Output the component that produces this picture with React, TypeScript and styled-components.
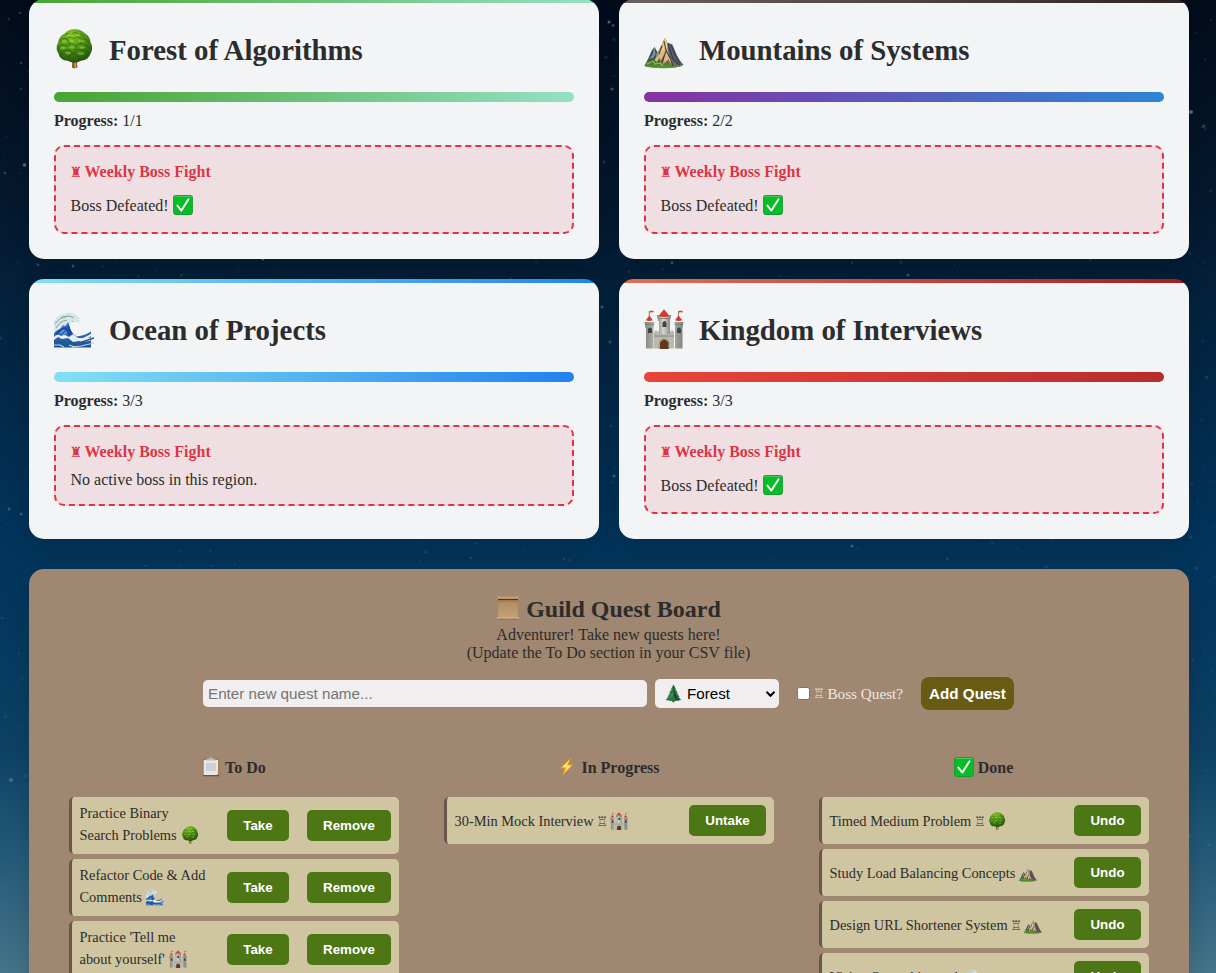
import React from 'react';
import styled, { createGlobalStyle } from 'styled-components';

const Global = createGlobalStyle`
  * { box-sizing: border-box; }
  html, body { margin: 0; padding: 0; }
  body {
    height: 973px;
    overflow: hidden;
    font-family: "Liberation Serif", "Times New Roman", serif;
    font-size: 16px;
    color: #2c2c2c;
    background: #04172c;
  }
  h2, h3, h4, p { margin: 0; }
`;

const Page = styled.div`
  position: relative;
  height: 973px;
  overflow: hidden;
  background: linear-gradient(180deg, #030c1b 0%, #04182d 20%, #04223d 32%, #02335a 54%, #05395f 66%, #0d4266 77%, #245a78 88%, #457488 100%);
`;

const Sky = styled.svg`
  position: absolute;
  inset: 0;
  width: 100%;
  height: 100%;
`;

const Content = styled.main`
  position: relative;
  width: 1160px;
  margin: -1px 0 0 29px;
`;

const Regions = styled.section`
  display: grid;
  grid-template-columns: 1fr 1fr;
  gap: 20px;
`;

const Card = styled.article<{ $bar: string }>`
  height: 260px;
  padding: 25px;
  border-radius: 15px;
  background: linear-gradient(90deg, ${(p) => p.$bar}) top / 100% 4px no-repeat, #f2f4f6;
  box-shadow: 0 8px 25px rgba(0, 0, 0, 0.15);
`;

const CardHead = styled.header`
  display: flex;
  align-items: center;
  gap: 15px;
  height: 51px;
  margin-bottom: 17px;
  svg { margin-top: -1px; }
`;

const CardTitle = styled.h2`
  font-size: 28.8px;
  line-height: 34px;
  font-weight: bold;
`;

const Meter = styled.div<{ $fill: string }>`
  height: 10px;
  border-radius: 5px;
  background: linear-gradient(90deg, ${(p) => p.$fill});
`;

const Progress = styled.p`
  margin-top: 10px;
  line-height: 18px;
`;

const Boss = styled.div`
  margin-top: 15px;
  padding: 15px 14.5px;
  border: 2px dashed #dc3545;
  border-radius: 10px;
  background: #efdfe2;
`;

const BossTitle = styled.h4`
  display: flex;
  height: 20px;
  margin-bottom: 9px;
  padding-top: 1px;
  line-height: 18px;
  color: #dc3545;
`;

const BossText = styled.p<{ $tall?: boolean }>`
  display: flex;
  align-items: center;
  height: ${(p) => (p.$tall ? 26 : 18)}px;
  padding-top: ${(p) => (p.$tall ? 3 : 0)}px;
  line-height: 18px;
  svg { margin: -2px 0 0 4.5px; }
`;

const Rook = styled.span<{ $w: number; $size: number }>`
  display: inline-block;
  width: ${(p) => p.$w}px;
  font-family: "DejaVu Sans", sans-serif;
  font-size: ${(p) => p.$size}px;
  font-weight: normal;
  line-height: 18px;
  text-indent: -1px;
`;

const Board = styled.section`
  height: 460px;
  margin-top: 30px;
  padding: 25px 40px 0;
  border-radius: 15px;
  background: #a08771;
  box-shadow: 0 8px 25px rgba(0, 0, 0, 0.15);
`;

const BoardTitle = styled.h2`
  display: flex;
  align-items: center;
  justify-content: center;
  gap: 6px;
  height: 32px;
  padding: 0 1px 2px 0;
  font-size: 24px;
  line-height: 28px;
  svg { margin-top: -3px; }
`;

const BoardNote = styled.p`
  padding-right: 1px;
  line-height: 18px;
  text-align: center;
`;

const QuestForm = styled.div`
  display: flex;
  align-items: center;
  height: 33px;
  margin: 15px 0 0 134px;
  font-family: "Liberation Sans", Arial, sans-serif;
  font-size: 15.2px;
`;

const QuestInput = styled.input`
  width: 444px;
  height: 27px;
  padding: 0 5px;
  border: 0;
  border-radius: 5px;
  background: #f0eeef;
  font: 15.2px "Liberation Sans", Arial, sans-serif;
  &::placeholder { color: #757575; opacity: 1; }
`;

const RegionSelect = styled.div`
  display: flex;
  align-items: center;
  width: 124px;
  height: 29px;
  margin-left: 8px;
  padding: 0 3px 0 9px;
  border-radius: 5px;
  background: #f0eeef;
  color: #000;
  span { flex: 1; margin-left: 4px; }
`;

const Check = styled.span`
  width: 13px;
  height: 13px;
  margin-left: 18px;
  border: 1px solid #767676;
  border-radius: 2.5px;
  background: #fff;
`;

const CheckLabel = styled.span`
  display: flex;
  width: 89px;
  margin-left: 4px;
  color: #f0e9e2;
  font: 15.2px/18px "Liberation Serif", serif;
  white-space: nowrap;
`;

const AddButton = styled.button`
  width: 93px;
  height: 33px;
  margin-left: 18px;
  padding: 0;
  border: 0;
  border-radius: 8px;
  background: #685c14;
  color: #fff;
  font: bold 15.2px "Liberation Sans", Arial, sans-serif;
`;

const Columns = styled.div`
  display: grid;
  grid-template-columns: repeat(3, 330px);
  column-gap: 45px;
  margin-top: 44px;
`;

const ColumnTitle = styled.h3`
  display: flex;
  align-items: center;
  justify-content: center;
  gap: 4px;
  height: 28px;
  margin-bottom: 15px;
  padding-right: 1px;
  font-size: 16px;
  svg { margin-top: -2px; }
`;

const Quest = styled.div<{ $tall?: boolean }>`
  display: flex;
  align-items: center;
  gap: 18px;
  height: ${(p) => (p.$tall ? 57 : 47)}px;
  margin-bottom: 5px;
  padding: 0 8px 0 7.5px;
  border-left: 3px solid #6a574b;
  border-radius: 5px;
  background: #cfc5a0;
`;

const QuestName = styled.div<{ $tall?: boolean }>`
  flex: 1;
  margin-top: ${(p) => (p.$tall ? -3 : 1)}px;
  font-size: 14.4px;
  white-space: nowrap;
  div { height: 22px; line-height: 22px; }
  svg { margin-left: 0.5px; vertical-align: -4px; }
`;

const QuestButton = styled.button<{ $w: number }>`
  width: ${(p) => p.$w}px;
  height: 31px;
  padding: 0;
  border: 0;
  border-radius: 5px;
  background: #4d7615;
  color: #fff;
  font: bold 13.33px "Liberation Sans", Arial, sans-serif;
`;

type IconProps = { size: number };

const Tree = ({ size }: IconProps) => (
  <svg width={size} height={size} viewBox="0 0 40 40">
    <defs>
      <radialGradient id="leaf" cx=".42" cy=".18" r=".85">
        <stop offset="0" stopColor="#86c62a" />
        <stop offset=".5" stopColor="#4c9016" />
        <stop offset="1" stopColor="#224d0b" />
      </radialGradient>
    </defs>
    <path d="M18.400 30h4.400l.6 8.600q-2.800 1.600-5.400 0z" fill="#7c5426" />
    <path d="M20 31h2l.4 7.800h-2z" fill="#c8964e" />
    <path d="M20.500 .3C25 .2 29 2 31.500 4.800 35 7 36.500 10.500 36.600 13.500 38.800 17 38.500 21.500 36.500 24.500 35 29.500 30.500 31.600 27 31.700 23 34.300 17 34.200 14 31.800 9 32 5 28.500 4.600 24.800 2 21 2.200 16.500 4.300 13.500 4.500 9.500 7.500 6 10.500 4.800 13 1.500 17 .2 20.500 .3z" fill="url(#leaf)" />
    <g fill="none" stroke="#234f08" strokeOpacity=".55" strokeWidth="1">
      <path d="M11 6q3-3 6 0 4-4 7-1 4-1 6 3M6 13q2-5 7-3 3-4 7 0 4-4 8 0 5-1 7 4M4 20q3-6 9-3 4-5 9 0 4-5 9-1 4 0 5 4M7 28q0-7 7-7 3 0 5 4 3-6 9-4 6 0 6 5M14 31q0-6 5-6 5 0 8 6M13 10l3 5M22 17l-2 4M28 10l-2 6" />
    </g>
    <g fill="#a8da44" fillOpacity=".5">
      <ellipse cx="16" cy="6" rx="3" ry="1.500" /><ellipse cx="24" cy="6" rx="2.500" ry="1.300" /><ellipse cx="10" cy="12.500" rx="2.600" ry="1.400" /><ellipse cx="18" cy="12" rx="2.500" ry="1.500" /><ellipse cx="27" cy="12" rx="3" ry="1.400" /><ellipse cx="9" cy="19" rx="3" ry="1.400" /><ellipse cx="18" cy="18.500" rx="3" ry="1.200" /><ellipse cx="28" cy="18.500" rx="3" ry="1.200" /><ellipse cx="14" cy="24" rx="3" ry="1.200" /><ellipse cx="27" cy="24.500" rx="3.200" ry="1.200" />
    </g>
  </svg>
);

const Mountain = ({ size }: IconProps) => (
  <svg width={size} height={size} viewBox="0 0 40 40">
    <defs>
      <linearGradient id="grass" x1="0" y1="0" x2="0" y2="1">
        <stop offset="0" stopColor="#37522c" />
        <stop offset="1" stopColor="#5d9a2c" />
      </linearGradient>
    </defs>
    <path d="M.5 37l4-8 3-7 3-4 3 5 3 8v7q-9 1-16-1z" fill="#3b5155" />
    <path d="M20.800 9l2.700 4.800 4.700 1.700 4.500 10.500 3.300 6L39.500 36q-6 3-18 2.500L9 37l4-12 4-8z" fill="#746858" />
    <path d="M20.800 9L17 17l-3.500 8.500L8 36l5-3 3-5-1 6 6-9-2 10 6-5-1-7 2-5-2-4z" fill="#dbb877" />
    <path d="M20.800 9l-1 7-4 9 6-7-2 10 4-6 1 9 3 5-1-12-2-6-3-5z" fill="#f1d59c" />
    <path d="M23.500 13.800l4.700 1.700 4.500 10.500 3.300 6 3.500 4-8 0-6-8-2-8z" fill="#57607a" />
    <path d="M24 15l5 15 7 6M27 16l4 10 5 8M20 12l2 9 4 8 3 8M18 17l-3 8M22 22l-4 11" stroke="#423a35" strokeWidth="1.100" fill="none" />
    <path d="M10.500 18l-2 8-5 6 4 0 4-7zM13 22l-1 7 3-3z" fill="#8098a0" />
    <path d="M.5 37l4-7 4-1 4 4 3-3 3 6 5-2 5 3 5-1 5 1q-9 2.600-20 2.200Q7 39.200.5 37z" fill="url(#grass)" />
    <path d="M3 35l6-3 2 3 5-1 3 3" stroke="#97b94d" strokeWidth="1.200" fill="none" />
  </svg>
);

const Wave = ({ size }: IconProps) => (
  <svg width={size} height={size} viewBox="0 0 40 40">
    <defs>
      <linearGradient id="sea" x1="0" y1="0" x2="0" y2="1">
        <stop offset="0" stopColor="#a9c6cc" />
        <stop offset=".45" stopColor="#3a72bb" />
        <stop offset="1" stopColor="#1d5290" />
      </linearGradient>
    </defs>
    <path d="M0 14Q3 7 9 5.500q7-2.500 12 0l5 4.500-2 0 1 3.500-3-2.500-3 2-2-.5q-3 2-1.500 6 1.500 6 7.500 9 8-1 14-5v16H0z" fill="url(#sea)" />
    <path d="M0 14Q3 7 9 5.500q7-2.500 12 0l5 4.500-2 0 1 3.500-3-2.500-1 4-2-3-2 1-1 3-2-3-3 4-2-1-3 4-4 2-4 5z" fill="#dbe7e2" />
    <path d="M1 15q5-7 12-7.500M2 19q4-7 11-8M7 8.500l7-1.500 6 1.500" stroke="#7ba3a6" strokeWidth="1" fill="none" />
    <path d="M2 26q4-7 10-7l4 8M14 16q2 8 6 11" stroke="#1645b0" strokeWidth="2" fill="none" />
    <path d="M6 24l4-3M8 27l5-4" stroke="#8dbde0" strokeWidth="1" fill="none" />
    <path d="M0 28q3-4 7-1l4-1 4 2 4-3 5 4 5 0 6-3 5-3v2l-6 4 6-1v2q-7 4-15 2l-6 1-5-4-6 1-4-2-4 3z" fill="#e6efea" />
    <path d="M0 33q8-1 14 4M15 33q7 5 17 4M28 33l12-4" stroke="#1f579b" strokeWidth="1.600" fill="none" />
    <path d="M0 36l6 0 4 2M18 38l9-1 13-3M15 36l6 2" stroke="#b9d8db" strokeWidth="1.100" fill="none" />
  </svg>
);

const Castle = ({ size }: IconProps) => (
  <svg width={size} height={size} viewBox="0 0 40 40">
    <defs>
      <linearGradient id="stone">
        <stop offset="0" stopColor="#84867e" />
        <stop offset=".45" stopColor="#d6d6cf" />
        <stop offset="1" stopColor="#80817a" />
      </linearGradient>
    </defs>
    <path d="M10 23l2-2 2 2 2-2 2 2 2-2 2 2 2-2 2 2 2-2 2 2v16.500H10z" fill="#b9bbb2" />
    <path d="M15 10h11v15H15zM13 6h14l-1 6H14z" fill="url(#stone)" />
    <path d="M2 18h7.500v21.500H2zM31 18h7.500v21.500H31zM.5 13h10l-1 6h-8zM30.500 13h9l-1 6h-7z" fill="url(#stone)" />
    <path d="M20 .3l5.500 6.700q-5.500 2-11 0zM5.300 6.500l3.500 4.800q-3.500 1.500-7 0zM34.500 6.500l3.800 4.800q-3.800 1.500-7.300 0z" fill="#d93630" />
    <path d="M5.300 7V2M34.500 7V2" stroke="#765f5b" strokeWidth=".8" />
    <path d="M5.500 2q2-1 4.500.6l-1 1q-2-1-3.500.2zM34.700 2q2-1 4.500.6l-1 1q-2-1-3.500.2z" fill="#e14a42" />
    <path d="M1 15.500h9M30.500 15.500h8.500M14 9.500h12M10 27h20" stroke="#777970" strokeWidth=".8" />
    <path d="M4 20q2-3 4 0v4H4zM33 20q2-3 4 0v4h-4zM18.500 14q2-4 4 0v4h-4z" fill="#3f423f" />
    <path d="M14.500 40V33q5.500-8 11 0v7z" fill="#a3a39b" />
    <path d="M16 40v-6.500q4-6 8.500 0V40z" fill="#6b3d20" />
    <path d="M20.300 31v9M18 33v7M22.500 33v7" stroke="#4c2a16" strokeWidth=".6" />
  </svg>
);

const Pine = () => (
  <svg width="19" height="19" viewBox="0 0 20 20">
    <path d="M8.700 16h2.400v3.200H8.700z" fill="#75471f" />
    <path d="M10 .5l2.500 4.500-.6.300 2.500 4-.7.300 2.600 3.700-.8.300 2.700 3.300q-8.200 2.400-16.400 0l2.700-3.300-.7-.4 2.500-3.700-.8-.2L8.100 5.300 7.500 5z" fill="#2d7545" />
    <path d="M10 .5l1 6 1.500 5 3.500 6-4-1.500-2-5z" fill="#164c2a" />
    <path d="M8.500 5l-2 3.500M7 10l-3 4M10 9l-2 4M6 15l2-3" stroke="#62a36a" strokeWidth=".8" fill="none" />
  </svg>
);

const CheckMark = () => (
  <svg width="20" height="20" viewBox="0 0 20 20">
    <rect x=".1" y=".1" width="19.800" height="19.800" rx="2.800" fill="#139b2f" />
    <rect x=".9" y=".9" width="18.200" height="18.200" rx="2" fill="#06bd27" />
    <path d="M1.500 1.400h17" stroke="#59d86c" strokeWidth=".8" />
    <path d="M4.400 10.600L8.400 15.600 15.500 4.200" fill="none" stroke="#fff" strokeWidth="1.900" strokeLinecap="round" strokeLinejoin="round" />
  </svg>
);

const Scroll = () => (
  <svg width="24" height="24" viewBox="0 0 24 24">
    <defs>
      <linearGradient id="paper" x1="0" y1="0" x2="0" y2="1">
        <stop offset="0" stopColor="#8d6947" />
        <stop offset=".25" stopColor="#b28d66" />
        <stop offset="1" stopColor="#c6a177" />
      </linearGradient>
    </defs>
    <path d="M2 2h20v20H2z" fill="url(#paper)" />
    <rect x="1" y=".5" width="22" height="2.600" rx="1" fill="#c29b6d" />
    <path d="M2 3.500h20" stroke="#4f3a27" strokeWidth="1.100" />
    <rect x="1" y="21" width="22" height="2.300" rx="1" fill="#cfaa7c" />
    <path d="M2 23.200h20" stroke="#825f3e" strokeWidth=".7" />
  </svg>
);

const Clipboard = () => (
  <svg width="20" height="20" viewBox="0 0 20 20">
    <rect x="1.200" y="1.500" width="17.300" height="18" rx="1" fill="#a87c4e" />
    <path d="M2.700 3h14.300v13.500l-1 1.500H2.700z" fill="#e5e6e8" />
    <path d="M5 6h10v8H5z" fill="#cfd0d3" />
    <path d="M5.500 3.500V2l3-.4q1.300-3 2.800 0l3 .4v1.500z" fill="#b9bdc2" />
    <path d="M2 18.700h16" stroke="#6c4a2b" strokeWidth="1" />
  </svg>
);

const Bolt = () => (
  <svg width="20" height="20" viewBox="0 0 20 20">
    <path d="M14.300.5L3 11.300l5 .2L4.800 19.300 16.500 7.600l-5.200-.2z" fill="#f7a51c" />
    <path d="M12.500 3L5.500 10l4.400.4L7 16 14.200 8.700l-4.600-.3z" fill="#ffe680" />
  </svg>
);

const ICONS = { tree: Tree, mountain: Mountain, wave: Wave, castle: Castle };
type IconName = keyof typeof ICONS;

const REGIONS: { icon: IconName; name: string; done: string; bar: string; fill: string; boss: boolean }[] = [
  { icon: 'tree', name: 'Forest of Algorithms', done: '1/1', bar: '#46a532, #95e0c4', fill: '#46a532, #95e0c4', boss: true },
  { icon: 'mountain', name: 'Mountains of Systems', done: '2/2', bar: '#6b6260, #2f2422', fill: '#8632a2, #2c85d6', boss: true },
  { icon: 'wave', name: 'Ocean of Projects', done: '3/3', bar: '#82e0f4, #2282ee', fill: '#82e0f4, #2282ee', boss: false },
  { icon: 'castle', name: 'Kingdom of Interviews', done: '3/3', bar: '#e17058, #a81c20', fill: '#e9453a, #b62d2c', boss: true },
];

type QuestData = { lines: string[]; icon: IconName; boss?: boolean };

const TODO: QuestData[] = [
  { lines: ['Practice Binary', 'Search Problems'], icon: 'tree' },
  { lines: ['Refactor Code & Add', 'Comments'], icon: 'wave' },
  { lines: ["Practice 'Tell me", "about yourself'"], icon: 'castle' },
];
const DOING: QuestData[] = [{ lines: ['30-Min Mock Interview'], icon: 'castle', boss: true }];
const DONE: QuestData[] = [
  { lines: ['Timed Medium Problem'], icon: 'tree', boss: true },
  { lines: ['Study Load Balancing Concepts'], icon: 'mountain' },
  { lines: ['Design URL Shortener System'], icon: 'mountain', boss: true },
  { lines: ['Vision Ouro chip work'], icon: 'wave' },
];

const QuestCard = ({ quest, actions }: { quest: QuestData; actions: [string, number][] }) => {
  const Icon = ICONS[quest.icon];
  const tall = quest.lines.length > 1;
  return (
    <Quest $tall={tall}>
      <QuestName $tall={tall}>
        {quest.lines.map((line, i) => (
          <div key={line}>
            {line}
            {i === quest.lines.length - 1 && (
              <>
                {' '}
                {quest.boss && <><Rook $w={9} $size={13}>♖</Rook>{' '}</>}
                <Icon size={18} />
              </>
            )}
          </div>
        ))}
      </QuestName>
      {actions.map(([label, w]) => <QuestButton key={label} $w={w}>{label}</QuestButton>)}
    </Quest>
  );
};

const BRIGHT = [
  [24.500, 165, 1.800, 0.5], [5, 173, 1.300, 0.3], [20, 13, 1.300, 0.25], [9, 19, 1.200, 0.2], [21, 63, 1.300, 0.25], [21, 89, 1.300, 0.2],
  [609, 22, 1.500, 0.55], [613, 25.500, 1.500, 0.35], [612, 89, 1.500, 0.4], [604, 162, 1.500, 0.2], [602, 307, 1.500, 0.4], [610, 342, 1.500, 0.3],
  [9, 509, 1.500, 0.35], [21, 514, 1.500, 0.35], [614, 476, 1.400, 0.4], [38, 265, 1.400, 0.3], [73, 266, 1.400, 0.35], [263, 259, 1.500, 0.45],
  [1191, 112, 2, 0.5], [672, 263, 1.400, 0.4], [908, 275, 1.600, 0.35], [852, 546, 1.500, 0.4], [11, 780, 2, 0.35], [1204, 126, 1.400, 0.3],
];

const faintStars = () => {
  let seed = 41;
  const next = () => {
    seed = (seed * 16807) % 2147483647;
    return seed / 2147483647;
  };
  return Array.from({ length: 900 }, () => [next() * 1216, next() * 860, 0.8 + next() * 0.9, 0.04 + next() * 0.12]);
};

const STARS = [...BRIGHT, ...faintStars()];

export default function App() {
  return (
    <Page>
      <Global />
      <Sky>
        {STARS.map(([x, y, r, o], i) => <circle key={i} cx={x} cy={y} r={r} fill="#8fb8d8" opacity={o} />)}
      </Sky>
      <Content>
        <Regions>
          {REGIONS.map((r) => {
            const Icon = ICONS[r.icon];
            return (
              <Card key={r.name} $bar={r.bar}>
                <CardHead>
                  <Icon size={40} />
                  <CardTitle>{r.name}</CardTitle>
                </CardHead>
                <Meter $fill={r.fill} />
                <Progress><b>Progress:</b> {r.done}</Progress>
                <Boss>
                  <BossTitle><Rook $w={14} $size={14}>♜</Rook>Weekly Boss Fight</BossTitle>
                  {r.boss
                    ? <BossText $tall>Boss Defeated! <CheckMark /></BossText>
                    : <BossText>No active boss in this region.</BossText>}
                </Boss>
              </Card>
            );
          })}
        </Regions>
        <Board>
          <BoardTitle><Scroll />Guild Quest Board</BoardTitle>
          <BoardNote>Adventurer! Take new quests here!</BoardNote>
          <BoardNote>(Update the To Do section in your CSV file)</BoardNote>
          <QuestForm>
            <QuestInput placeholder="Enter new quest name..." />
            <RegionSelect>
              <Pine />
              <span>Forest</span>
              <svg width="11" height="8" viewBox="0 0 11 8"><path d="M1.500 1.800l4 4 4-4" fill="none" stroke="#000" strokeWidth="2" /></svg>
            </RegionSelect>
            <Check />
            <CheckLabel><Rook $w={13.500} $size={13}>♖</Rook>Boss Quest?</CheckLabel>
            <AddButton>Add Quest</AddButton>
          </QuestForm>
          <Columns>
            <div>
              <ColumnTitle><Clipboard />To Do</ColumnTitle>
              {TODO.map((q) => <QuestCard key={q.lines[0]} quest={q} actions={[['Take', 62], ['Remove', 84]]} />)}
            </div>
            <div>
              <ColumnTitle><Bolt />In Progress</ColumnTitle>
              {DOING.map((q) => <QuestCard key={q.lines[0]} quest={q} actions={[['Untake', 77]]} />)}
            </div>
            <div>
              <ColumnTitle><CheckMark />Done</ColumnTitle>
              {DONE.map((q) => <QuestCard key={q.lines[0]} quest={q} actions={[['Undo', 67]]} />)}
            </div>
          </Columns>
        </Board>
      </Content>
    </Page>
  );
}
